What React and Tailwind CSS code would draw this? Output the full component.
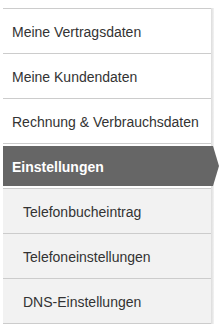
export default function App() {
  const main = ["Meine Vertragsdaten", "Meine Kundendaten", "Rechnung & Verbrauchsdaten"];
  const sub = ["Telefonbucheintrag", "Telefoneinstellungen", "DNS-Einstellungen"];
  return (
    <div className="w-[219px] h-[328px] bg-white pt-[8px] overflow-hidden" style={{ fontFamily: '"Liberation Sans", Arial, sans-serif' }}>
      <div className="relative flex w-[214px]">
        <div className="w-[211px]">
          <ul className="ml-[3px] border-t border-[#cccccc]">
            {main.map((t) => (
              <li key={t} className="h-[45px] border-b border-[#cccccc] flex items-center pl-[9px] pt-[3px] text-[14px] text-[#333333]">
                {t}
              </li>
            ))}
          </ul>
          <div className="relative mt-[2px] mb-[2px] ml-[3px] h-[40px] bg-[#666666] flex items-center pl-[9px] pt-[2px] text-[14px] font-bold text-white">
            Einstellungen
            <svg className="absolute left-[208px] top-0" width="8" height="40" viewBox="0 0 8 40">
              <path d="M0 0 L2 0 Q5 10 8 20 Q5 30 2 40 L0 40 Z" fill="#666666" />
            </svg>
          </div>
          <ul className="bg-[#f2f2f2] border-t border-[#cccccc] ml-[3px]">
            {sub.map((t) => (
              <li key={t} className="h-[45px] border-b border-[#cccccc] flex items-center pl-[20px] pt-[3px] text-[14px] text-[#333333]">
                {t}
              </li>
            ))}
          </ul>
        </div>
        <div className="w-[3px] bg-gradient-to-r from-[#dcdcdc] to-[#f3f3f3]" />
      </div>
    </div>
  );
}
